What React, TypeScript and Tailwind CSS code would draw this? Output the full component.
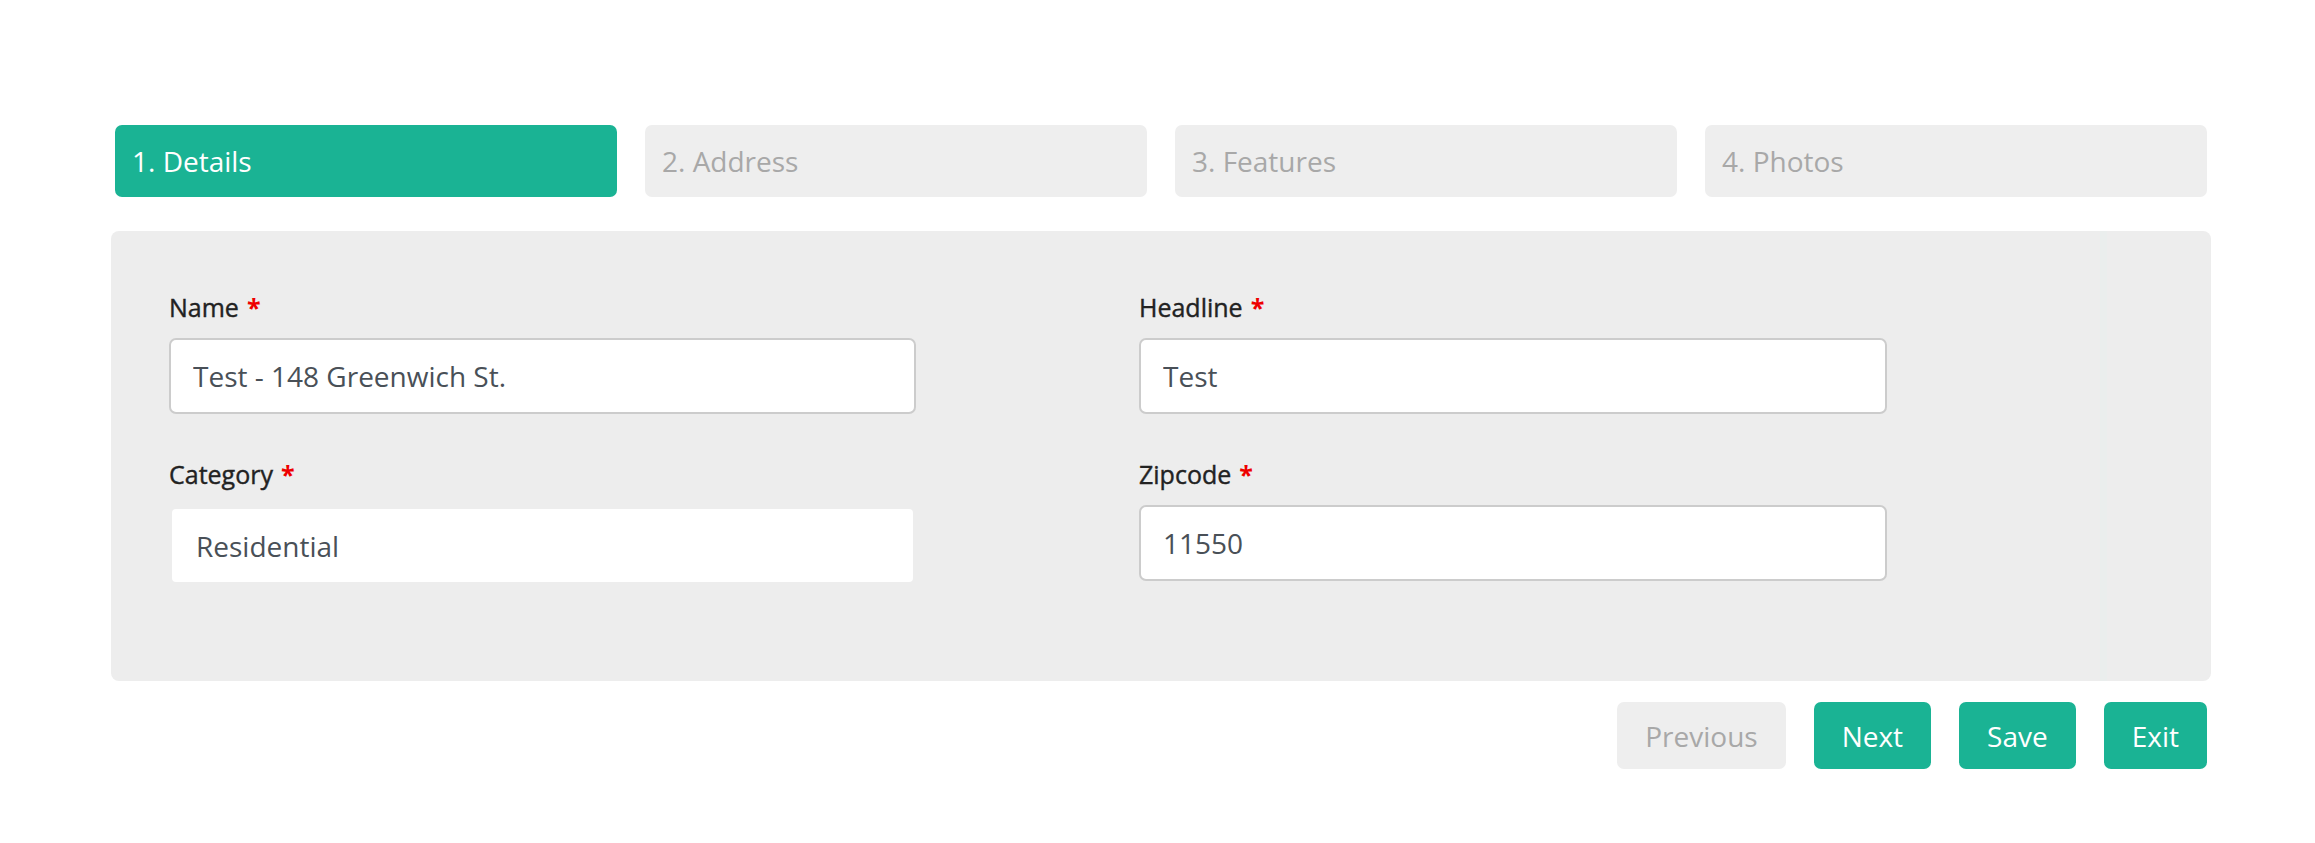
const tabs = ["1. Details", "2. Address", "3. Features", "4. Photos"];

function Label({ text }: { text: string }) {
  return (
    <label className="block h-[36px] text-[25px] leading-[36px] font-medium text-[#222222] [-webkit-text-stroke:0.4px_#222222]">
      {text}
      <span className="ml-[8px] font-bold text-[#ee0000] [-webkit-text-stroke:0px]">*</span>
    </label>
  );
}

function Field({ label, value }: { label: string; value: string }) {
  return (
    <div>
      <Label text={label} />
      <input
        readOnly
        defaultValue={value}
        className="mt-[13px] block h-[76px] w-full rounded-[7px] border-2 border-[#cccccc] bg-white px-[22px] text-[28px] text-[#495057] outline-none"
      />
    </div>
  );
}

function SelectField({ label, value }: { label: string; value: string }) {
  return (
    <div>
      <Label text={label} />
      <div className="mx-[3px] mt-[17px] flex h-[73px] items-center rounded-[4px] bg-white pl-[24px] text-[28px] text-[#495057]">
        {value}
      </div>
    </div>
  );
}

export default function App() {
  return (
    <div className="min-h-screen bg-white font-['Open_Sans',sans-serif]">
      <div className="ml-[111px] w-[2100px] pt-[125px]">
        <div className="flex gap-[28px] px-[4px]">
          {tabs.map((t, i) => (
            <div
              key={t}
              className={
                i === 0
                  ? "flex h-[72px] w-[502px] items-center rounded-[7px] bg-[#1ab394] pl-[17px] text-[28px] text-white"
                  : "flex h-[72px] w-[502px] items-center rounded-[7px] bg-[#eeeeee] pl-[17px] text-[28px] text-[#a8a8a8]"
              }
            >
              {t}
            </div>
          ))}
        </div>

        <div className="mt-[34px] flex h-[450px] overflow-hidden rounded-[8px] bg-[#ededed]">
          <div className="grid flex-1 grid-cols-[747px_748px] content-start gap-x-[223px] gap-y-[42px] pl-[58px] pt-[58px]">
            <Field label="Name" value="Test - 148 Greenwich St." />
            <Field label="Headline" value="Test" />
            <SelectField label="Category" value="Residential" />
            <Field label="Zipcode" value="11550" />
          </div>
          <div className="w-[7px] bg-[#eaeeed]" />
          <div className="w-[104px]" />
        </div>

        <div className="mt-[21px] flex justify-end gap-[28px] pr-[4px]">
          <button className="h-[67px] rounded-[7px] bg-[#eeeeee] px-[28px] text-[28px] text-[#a8a8a8]">
            Previous
          </button>
          <button className="h-[67px] rounded-[7px] bg-[#1ab394] px-[28px] text-[28px] text-white">
            Next
          </button>
          <button className="h-[67px] rounded-[7px] bg-[#1ab394] px-[28px] text-[28px] text-white">
            Save
          </button>
          <button className="h-[67px] rounded-[7px] bg-[#1ab394] px-[28px] text-[28px] text-white">
            Exit
          </button>
        </div>
      </div>
    </div>
  );
}
